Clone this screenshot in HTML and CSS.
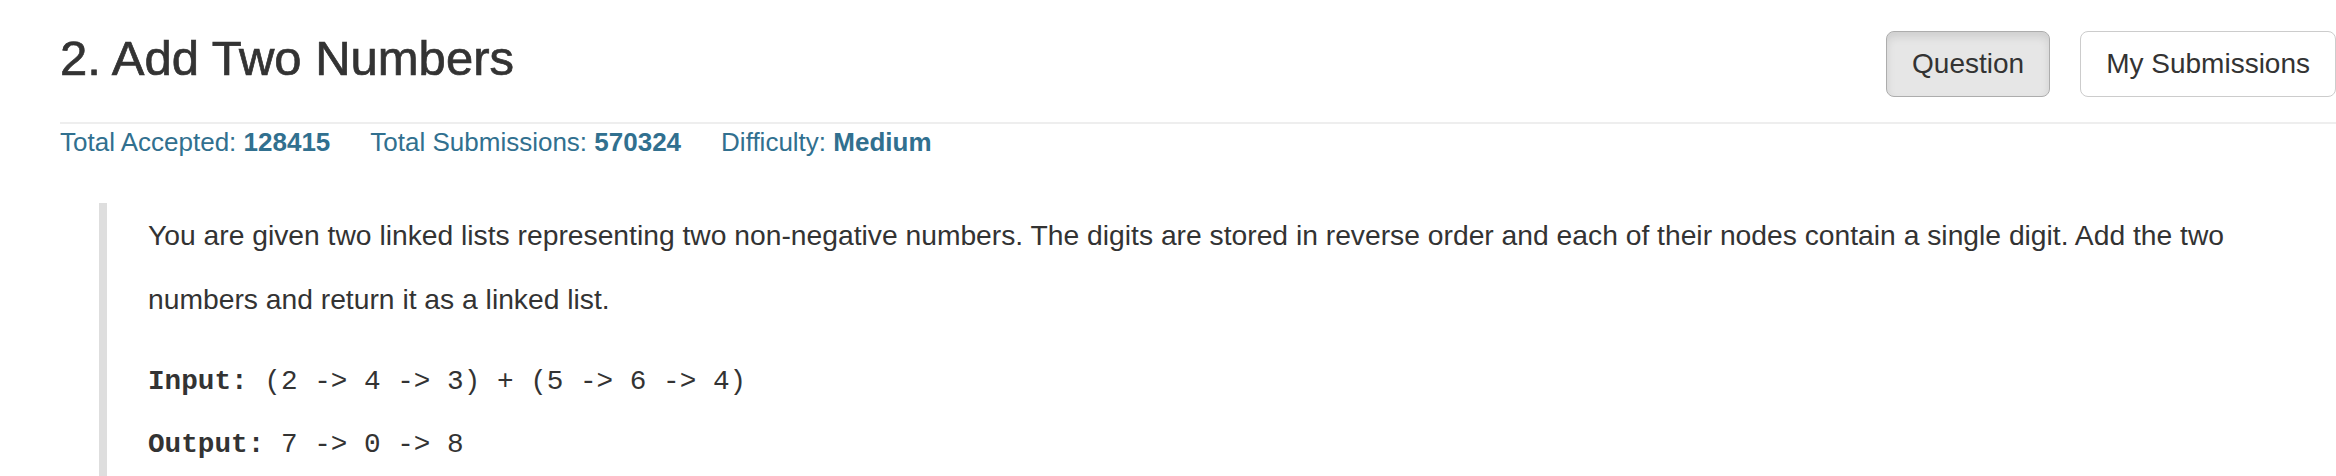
FILE: index.html
```html
<!DOCTYPE html>
<html lang="en">
<head>
<meta charset="utf-8">
<title>2. Add Two Numbers</title>
<link rel="stylesheet" href="styles.css">
</head>
<body>
<div class="page">
  <header class="header">
    <h2 class="title">2. Add Two Numbers</h2>
    <div class="tabs">
      <a class="btn btn-active">Question</a>
      <a class="btn">My Submissions</a>
    </div>
  </header>
  <div class="meta">
    <span>Total Accepted: <b>128415</b></span>
    <span>Total Submissions: <b>570324</b></span>
    <span>Difficulty: <b>Medium</b></span>
  </div>
  <blockquote class="question">
    <p class="desc">You are given two linked lists representing two non-negative numbers. The digits are stored in reverse order and each of their nodes contain a single digit. Add the two numbers and return it as a linked list.</p>
<pre class="example"><b>Input:</b> (2 -&gt; 4 -&gt; 3) + (5 -&gt; 6 -&gt; 4)
<b>Output:</b> 7 -&gt; 0 -&gt; 8</pre>
  </blockquote>
</div>
</body>
</html>
```

FILE: styles.css
```css
html, body {
  margin: 0;
  padding: 0;
  background: #ffffff;
}

body {
  font-family: "Liberation Sans", Arial, sans-serif;
  color: #333333;
  overflow: hidden;
}

.page {
  padding-left: 60px;
}

.header {
  display: flex;
  justify-content: space-between;
  align-items: flex-start;
  padding-top: 31px;
  padding-bottom: 25px;
  border-bottom: 2px solid #eeeeee;
}

.title {
  margin: 0;
  font-size: 49px;
  line-height: 54px;
  font-weight: 500;
  color: #333333;
  -webkit-text-stroke: 0.7px #333333;
}

.tabs {
  display: flex;
  gap: 30px;
}

.btn {
  display: block;
  height: 64px;
  line-height: 64px;
  padding: 0 25px;
  font-size: 28px;
  color: #333333;
  background: #ffffff;
  border: 1px solid #cccccc;
  border-radius: 8px;
  white-space: nowrap;
  cursor: pointer;
}

.btn-active {
  background: #e6e6e6;
  border-color: #adadad;
  box-shadow: inset 0 5px 9px rgba(0, 0, 0, 0.1);
}

.meta {
  display: flex;
  gap: 40px;
  font-size: 26px;
  line-height: 36px;
  color: #31708f;
}

.meta b {
  font-weight: 700;
}

.question {
  margin: 43px 60px 0 39px;
  padding: 0 0 0 41px;
  border-left: 8px solid #dedede;
}

.desc {
  margin: 0 0 19px;
  font-size: 28.25px;
  line-height: 64px;
}

.example {
  margin: 0;
  font-family: "Liberation Mono", "Courier New", monospace;
  font-size: 27.7px;
  line-height: 63px;
  color: #333333;
}
```
